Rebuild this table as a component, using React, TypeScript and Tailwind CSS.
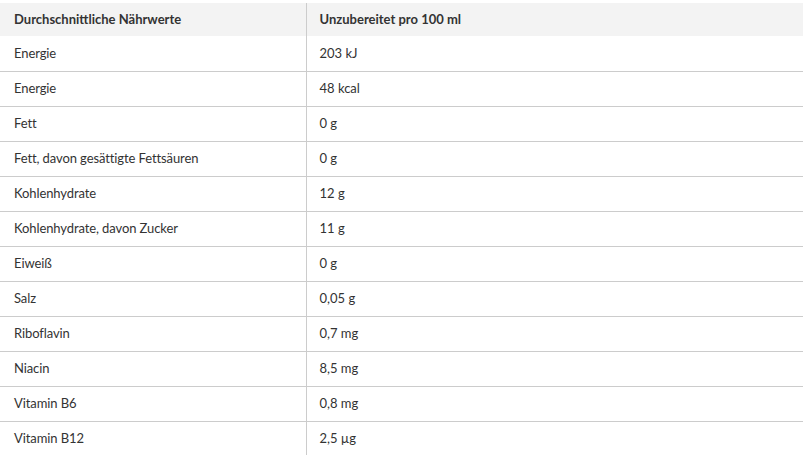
const ROWS = [
  ['Energie', '203 kJ'],
  ['Energie', '48 kcal'],
  ['Fett', '0 g'],
  ['Fett, davon gesättigte Fettsäuren', '0 g'],
  ['Kohlenhydrate', '12 g'],
  ['Kohlenhydrate, davon Zucker', '11 g'],
  ['Eiweiß', '0 g'],
  ['Salz', '0,05 g'],
  ['Riboflavin', '0,7 mg'],
  ['Niacin', '8,5 mg'],
  ['Vitamin B6', '0,8 mg'],
  ['Vitamin B12', '2,5 µg'],
]

export default function App() {
  return (
    <div className="bg-white w-[806px] h-[462px] pt-[3px] text-[#333] text-[13px] font-['Lato',sans-serif]">
      <table className="w-[803px] border-collapse">
        <thead>
          <tr className="bg-[#f3f3f3] h-[33px]">
            <th className="w-[306px] text-left font-bold pl-[14px] border-r border-[#ccc]">Durchschnittliche Nährwerte</th>
            <th className="text-left font-bold pl-[13px]">Unzubereitet pro 100 ml</th>
          </tr>
        </thead>
        <tbody>
          {ROWS.map(([name, value], i) => (
            <tr key={i} className={i < ROWS.length - 1 ? 'h-[35px] border-b border-[#ccc]' : 'h-[34px]'}>
              <td className="pl-[14px] border-r border-[#ccc] tracking-[-0.1px]">{name}</td>
              <td className="pl-[13px]">{value}</td>
            </tr>
          ))}
        </tbody>
      </table>
    </div>
  )
}
